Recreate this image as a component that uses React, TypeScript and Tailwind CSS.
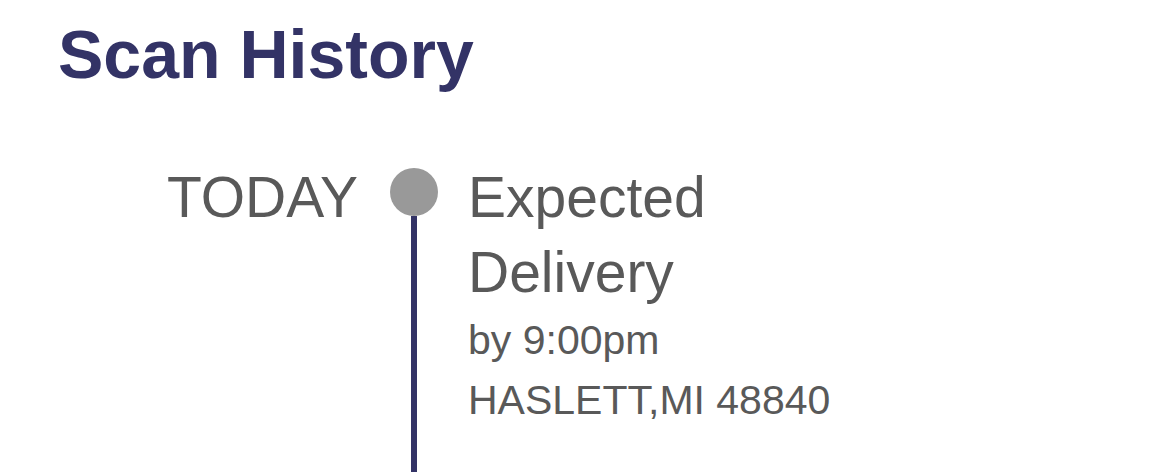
export default function App() {
  return (
    <main className="min-h-screen bg-white font-['Liberation_Sans',Arial,sans-serif] text-[#595959]">
      <h1 className="px-[58px] pt-[14px] text-[68px] leading-[80px] font-bold text-[#333366]">Scan History</h1>
      <ol className="mt-[74px]">
        <li className="grid grid-cols-[360px_108px_1fr]">
          <time className="-mt-2 pr-0.5 text-right text-[57px] leading-[74px]">TODAY</time>
          <div className="flex flex-col items-center">
            <span className="size-12 rounded-full bg-[#999999]" />
            <span className="min-h-[256px] w-1.5 grow bg-[#333366]" />
          </div>
          <div className="-mt-2">
            <h2 className="max-w-[300px] text-[57px] leading-[75px]">Expected Delivery</h2>
            <p className="text-[41px] leading-[60px]">by 9:00pm</p>
            <p className="text-[41px] leading-[60px]">HASLETT,MI 48840</p>
          </div>
        </li>
      </ol>
    </main>
  );
}
